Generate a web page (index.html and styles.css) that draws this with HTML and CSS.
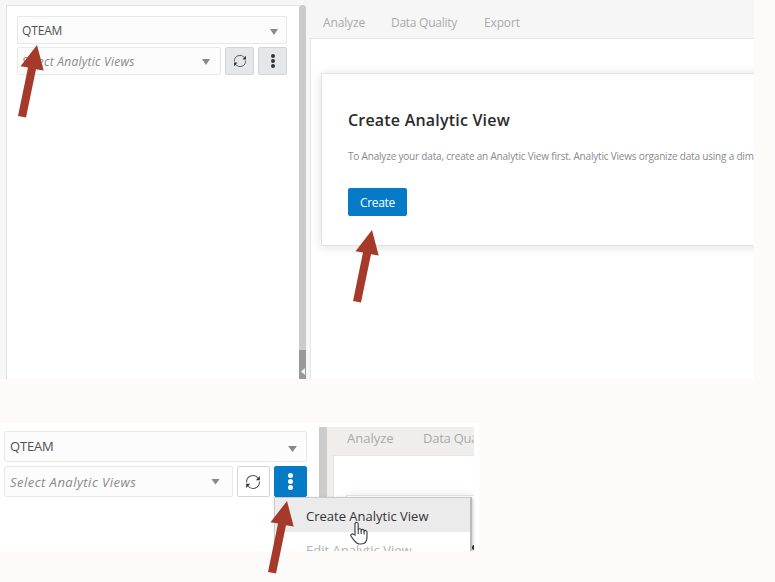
FILE: index.html
```html
<!DOCTYPE html>
<html lang="en">
<head>
<meta charset="utf-8">
<title>Analytic Views</title>
<link rel="stylesheet" href="styles.css">
</head>
<body>
<svg class="defs" width="0" height="0">
  <defs>
    <symbol id="refresh" viewBox="0 0 16 16">
      <path d="M1.600 8.500A6.400 6.400 0 0 1 13 4M14.400 7.500A6.400 6.400 0 0 1 3 12" fill="none" stroke="#55595c" stroke-width="1.100"/>
      <path d="M14.800 2V6.200H10.800zM1.200 14V9.800H5.200z" fill="#303336"/>
    </symbol>
    <symbol id="arrow" viewBox="0 0 26 74">
      <path d="M19 1L25.700 26.500L18 25.200L8 73.500L0 72L10 23.500L2.500 22.200z" fill="#a53a2a"/>
    </symbol>
  </defs>
</svg>

<section class="shot main-shot">
  <aside class="panel">
    <div class="field"><span>QTEAM</span><i class="caret"></i></div>
    <div class="row">
      <div class="field select"><span class="hint">Select Analytic Views</span><i class="caret"></i></div>
      <button class="tool"><svg class="refresh"><use href="#refresh"/></svg></button>
      <button class="tool"><span class="dots"><b></b><b></b><b></b></span></button>
    </div>
  </aside>
  <div class="splitter"><div class="handle"><i></i></div></div>
  <main class="work">
    <nav class="tabs"><span class="t-analyze">Analyze</span><span class="t-quality">Data Quality</span><span class="t-export">Export</span></nav>
    <div class="content">
      <article class="card">
        <h1>Create Analytic View</h1>
        <p>To Analyze your data, create an Analytic View first. Analytic Views organize data using a dim</p>
        <button class="create">Create</button>
      </article>
    </div>
  </main>
</section>

<section class="shot menu-shot">
  <aside class="panel">
    <div class="field"><span>QTEAM</span><i class="caret"></i></div>
    <div class="row">
      <div class="field select"><span class="hint">Select Analytic Views</span><i class="caret"></i></div>
      <button class="tool"><svg class="refresh"><use href="#refresh"/></svg></button>
      <button class="tool active"><span class="dots"><b></b><b></b><b></b></span></button>
    </div>
  </aside>
  <div class="splitter"></div>
  <main class="work">
    <nav class="tabs"><span class="t-analyze">Analyze</span><span class="t-quality">Data Quality</span></nav>
    <div class="content"><div class="card"></div></div>
  </main>
  <div class="menu">
    <div class="item current"><span>Create Analytic View</span></div>
    <div class="item disabled"><span>Edit Analytic View</span></div>
  </div>
  <i class="speck"></i>
  <svg class="hand" viewBox="0 0 18 24">
    <path d="M5 14V3.200C5 .6 8.200 .6 8.200 3.200V9C8.500 7.200 11 7.400 11.200 9.200C11.800 7.800 14 8.200 14.100 10C15 8.900 17 9.500 17 11.500V16C17 20 15 23 11 23H9.500C6 23 4.500 20 1.300 15.500C-.1 13.500 2.200 12 3.600 13.300Z" fill="#fff" stroke="#40434d" stroke-width="1.200"/>
    <path d="M8.200 9V13M11.200 9.500V13M14.100 10V13.500" stroke="#40434d" stroke-width="1.100"/>
  </svg>
</section>

<svg class="arrow a1"><use href="#arrow"/></svg>
<svg class="arrow a2"><use href="#arrow"/></svg>
<svg class="arrow a3"><use href="#arrow"/></svg>
</body>
</html>
```

FILE: styles.css
```css
* { box-sizing: border-box; }
body {
  position: relative;
  width: 775px;
  height: 582px;
  margin: 0;
  overflow: hidden;
  background: #fcfbf9;
  color: #505050;
  font-family: "Open Sans", "Noto Sans", sans-serif;
  font-size: 12px;
}
.defs { position: absolute; }
.shot { display: flex; position: relative; overflow: hidden; }
button { padding: 0; font: inherit; }

.main-shot { width: 754px; height: 379px; padding: 5px 0 0 6px; background: #f6f6f6; }
.panel { display: flex; flex-direction: column; background: #fff; }
.main-shot .panel { width: 293px; padding: 10px 12px 0 10px; gap: 3px; border: solid #e2e2e2; border-width: 1px 0 0 1px; }
.field {
  display: flex;
  align-items: center;
  justify-content: space-between;
  height: 28px;
  padding: 0 8px 0 4px;
  background: #fcfcfc;
  border: 1px solid #e8e8e8;
  border-radius: 2px;
  white-space: nowrap;
  letter-spacing: -.15px;
}
.row { display: flex; gap: 4px; }
.select { width: 204px; padding-right: 10px; }
.hint { color: #8a8a8a; font-style: italic; letter-spacing: .25px; }
.caret { width: 8px; height: 6px; background: #87898b; clip-path: polygon(0 0, 100% 0, 50% 100%); }
.main-shot .field > .caret { margin-top: 4px; }
.main-shot .select > .caret { margin-top: 2px; }
.tool {
  display: flex;
  align-items: center;
  justify-content: center;
  width: 29px;
  height: 28px;
  background: #e4e8ea;
  border: 1px solid #d2d5d7;
  border-radius: 2px;
}
.refresh { width: 14px; height: 14px; }
.dots { display: grid; gap: 1px; }
.dots b { width: 4px; height: 4px; border-radius: 50%; background: #333638; }

.splitter { width: 7px; background: #cbcbcb; border-radius: 3px 3px 0 0; }
.main-shot .splitter { display: flex; align-items: flex-end; }
.handle { width: 7px; height: 29px; background: #999; padding: 18px 0 0 2px; }
.handle i { display: block; width: 4px; height: 7px; background: #f4f4f4; clip-path: polygon(100% 0, 100% 100%, 0 50%); }

.work { flex: 1; min-width: 0; }
.tabs { display: flex; color: #aaa; white-space: nowrap; }
.main-shot .tabs { height: 33px; padding: 9px 0 0 17px; letter-spacing: -.27px; }
.main-shot .t-analyze { width: 68px; }
.main-shot .t-quality { width: 93px; }
.main-shot .t-analyze, .main-shot .t-export { letter-spacing: -.15px; }
.content { background: #fff; border: solid #e5e5e5; border-width: 1px 0 0 1px; }
.main-shot .content { height: 341px; margin-left: 4px; padding: 34px 0 0 10px; overflow: hidden; }
.card { background: #fff; border: solid #e2e2e2; border-width: 1px 0 1px 1px; box-shadow: 0 1px 10px rgba(0, 0, 0, .12); }
.main-shot .card { width: 460px; height: 173px; padding: 34px 0 0 26px; overflow: hidden; }
h1 { margin: 0; color: #2b2b2b; font-size: 16px; line-height: 24px; font-weight: 600; letter-spacing: .2px; }
p { margin: 16px 0 0; color: #8a8a8a; font-size: 10px; line-height: 16px; letter-spacing: -.19px; white-space: nowrap; }
.create { display: block; width: 59px; height: 28px; margin-top: 24px; background: #057bc8; border: 0; border-radius: 2px; color: #fff; letter-spacing: -.3px; }

.menu-shot { width: 479px; height: 128px; margin-top: 44px; background: #fff; font-size: 13px; }
.menu-shot .panel { width: 319px; padding: 8px 12px 0 4px; gap: 4px; }
.menu-shot .field { height: 31px; padding-left: 5px; }
.menu-shot .panel > .field span { margin-top: -2px; }
.menu-shot .hint { letter-spacing: .47px; }
.menu-shot .select { width: 229px; padding-right: 12px; }
.menu-shot .panel > .field { padding-right: 9px; }
.menu-shot .caret { width: 9px; height: 6px; }
.menu-shot .panel > .field .caret { margin-top: 5px; }
.menu-shot .tool { width: 33px; height: 31px; background: #fff; }
.menu-shot .row .active { background: #057bc8; border-color: #057bc8; }
.menu-shot .active .dots b { background: #fff; }
.menu-shot .refresh { width: 16px; height: 16px; margin-left: -1px; }
.menu-shot .dots b { width: 5px; height: 5px; }
.menu-shot .splitter { margin-top: 4px; border-radius: 0; width: 8px; }
.menu-shot .work { flex: none; width: 147px; margin-top: 4px; overflow: hidden; background: #efeeec; }
.menu-shot .tabs { height: 28px; padding: 2px 0 0 20px; }
.menu-shot .t-analyze { width: 76px; flex: none; }
.menu-shot .t-quality { letter-spacing: -.25px; }
.menu-shot .content { height: 100px; margin-left: 6px; padding: 39px 0 0 12px; }
.menu-shot .card { height: 90px; }
.menu {
  position: absolute;
  left: 274px;
  top: 74px;
  width: 198px;
  height: 60px;
  background: #fff;
  border: 1px solid #cbcbcb;
  border-right: 2px solid #bbb;
  box-shadow: 1px 1px 3px rgba(0, 0, 0, .2);
}
.item { height: 34px; padding: 9px 0 0 31px; line-height: 18px; white-space: nowrap; }
.current { background: #ebebeb; color: #333; }
.disabled { color: #b0b0b0; }
.speck { position: absolute; left: 472px; top: 122px; width: 2px; height: 5px; background: #333; border-radius: 2px 0 0 2px; }
.hand { position: absolute; left: 350px; top: 98px; width: 18px; height: 24px; }

.arrow { position: absolute; width: 26px; height: 74px; }
.a1 { left: 18px; top: 44px; }
.a2 { left: 353px; top: 229px; }
.a3 { left: 268px; top: 500px; }
```
